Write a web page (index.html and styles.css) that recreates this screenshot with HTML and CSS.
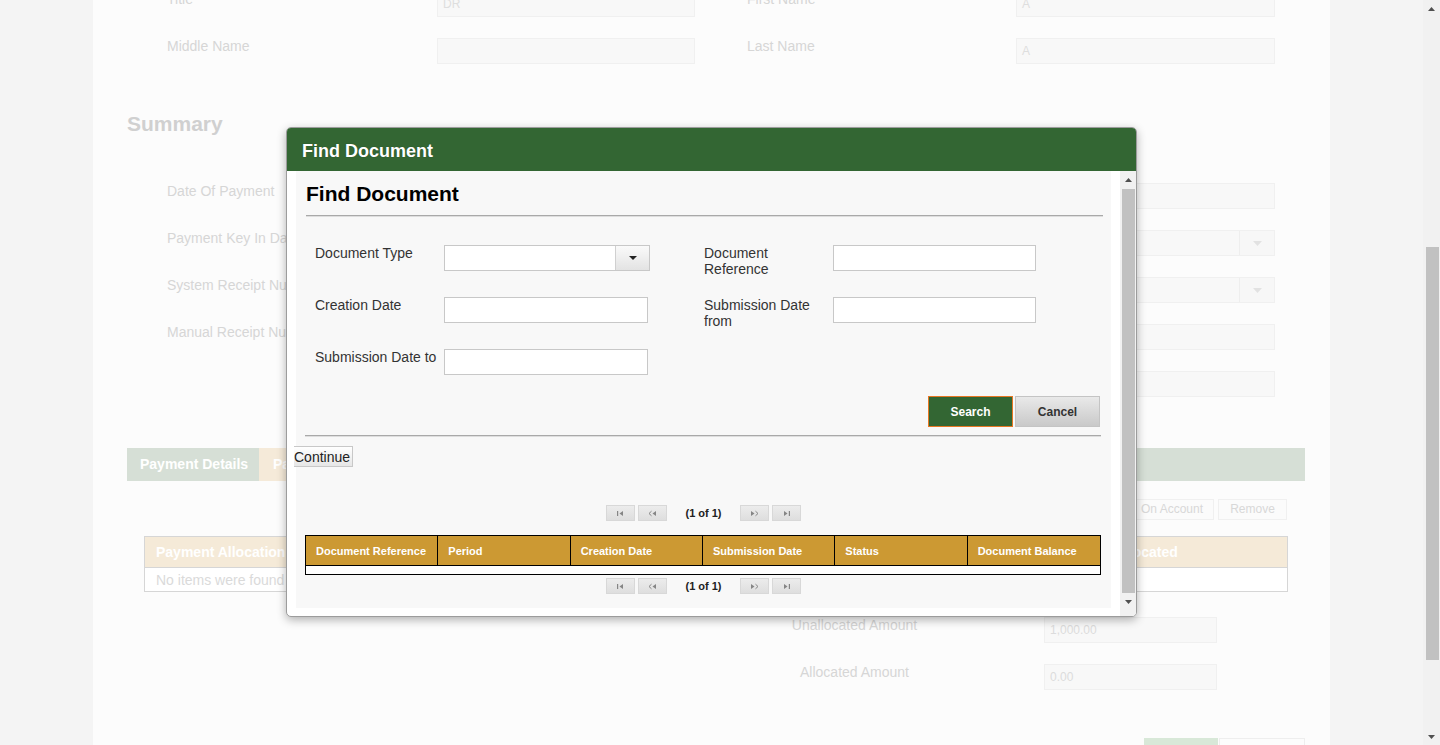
FILE: index.html
```html
<!DOCTYPE html>
<html lang="en">
<head>
<meta charset="utf-8">
<title>Find Document</title>
<link rel="stylesheet" href="styles.css">
</head>
<body>
<div class="viewport">
  <div class="page">
    <main class="panel">
      <section class="field-grid person">
        <span class="bg-label">Title</span>
        <div class="bg-input">DR</div>
        <span class="bg-label right">First Name</span>
        <div class="bg-input">A</div>
        <span class="bg-label">Middle Name</span>
        <div class="bg-input"></div>
        <span class="bg-label right">Last Name</span>
        <div class="bg-input">A</div>
      </section>

      <h2 class="section-title">Summary</h2>

      <section class="field-grid summary">
        <span class="bg-label">Date Of Payment</span>
        <div class="bg-input"></div>
        <span class="bg-label right"></span>
        <div class="bg-input"></div>

        <span class="bg-label">Payment Key In Date</span>
        <div class="bg-input"></div>
        <span class="bg-label right"></span>
        <div class="bg-input bg-select"><span class="bg-select-btn"><svg width="9" height="5" viewBox="0 0 9 5"><path d="M0 0h9L4.5 5z" fill="#e2e2e2"/></svg></span></div>

        <span class="bg-label">System Receipt Number</span>
        <div class="bg-input"></div>
        <span class="bg-label right"></span>
        <div class="bg-input bg-select"><span class="bg-select-btn"><svg width="9" height="5" viewBox="0 0 9 5"><path d="M0 0h9L4.5 5z" fill="#e2e2e2"/></svg></span></div>

        <span class="bg-label">Manual Receipt Number</span>
        <div class="bg-input"></div>
        <span class="bg-label right"></span>
        <div class="bg-input"></div>

        <span class="bg-label"></span>
        <span></span>
        <span class="bg-label right"></span>
        <div class="bg-input"></div>
      </section>

      <nav class="tabs">
        <span class="tab tab-active">Payment Details</span>
        <span class="tab tab-alt">Payment Allocation</span>
      </nav>

      <div class="alloc-actions">
        <span class="bg-btn btn-account">On Account</span>
        <span class="bg-btn btn-remove">Remove</span>
      </div>

      <table class="alloc-table">
        <thead>
          <tr>
            <th class="c-type">Payment Allocation Type</th>
            <th class="c-ref">Document Reference</th>
            <th class="c-bal">Document Balance</th>
            <th class="c-amt">Amount Allocated</th>
          </tr>
        </thead>
        <tbody>
          <tr><td colspan="4">No items were found</td></tr>
        </tbody>
      </table>

      <div class="amounts">
        <span class="amount-label">Unallocated Amount</span>
        <div class="bg-input amount-input">1,000.00</div>
        <span class="amount-label">Allocated Amount</span>
        <div class="bg-input amount-input">0.00</div>
      </div>

      <div class="footer-actions">
        <span class="foot-btn foot-primary"></span>
        <span class="foot-btn foot-secondary"></span>
      </div>
    </main>
  </div>

  <div class="page-scrollbar">
    <span class="psb-arrow"><svg width="7" height="4" viewBox="0 0 7 4"><path d="M0 4h7L3.5 0z" fill="#505050"/></svg></span>
    <span class="psb-thumb"></span>
    <span class="psb-arrow psb-down"><svg width="7" height="4" viewBox="0 0 7 4"><path d="M0 0h7L3.5 4z" fill="#505050"/></svg></span>
  </div>
</div>

<div class="dialog" role="dialog" aria-label="Find Document">
  <div class="dialog-header">Find Document</div>
  <div class="dialog-body">
    <div class="dialog-content">
      <h2 class="dlg-title">Find Document</h2>
      <div class="rule rule-top"></div>

      <div class="search-grid">
        <label class="s-label">Document Type</label>
        <div class="select">
          <span class="select-value"></span>
          <span class="select-btn"><svg width="8" height="4" viewBox="0 0 8 4"><path d="M0 0h8L4 4z" fill="#222"/></svg></span>
        </div>
        <label class="s-label s-right">Document Reference</label>
        <input class="s-input s-input-r" type="text">

        <label class="s-label">Creation Date</label>
        <input class="s-input" type="text">
        <label class="s-label s-right">Submission Date from</label>
        <input class="s-input s-input-r" type="text">

        <label class="s-label">Submission Date to</label>
        <input class="s-input" type="text">
      </div>

      <div class="action-row">
        <button class="btn btn-search" type="button">Search</button>
        <button class="btn btn-cancel" type="button">Cancel</button>
      </div>

      <div class="rule rule-mid"></div>

      <button class="btn-continue" type="button">Continue</button>

      <div class="paginator">
        <span class="pg-btn"><svg width="9" height="7" viewBox="0 0 9 7"><rect x="1" y="1" width="1.2" height="5" fill="#858585"/><path d="M7 1v5L3.5 3.5z" fill="#858585"/></svg></span>
        <span class="pg-btn"><svg width="9" height="7" viewBox="0 0 9 7"><path d="M3.5 1.2L1 3.5l2.5 2.3" fill="none" stroke="#858585"/><path d="M8 1v5L4.5 3.5z" fill="#858585"/></svg></span>
        <span class="pg-text">(1 of 1)</span>
        <span class="pg-btn"><svg width="9" height="7" viewBox="0 0 9 7"><path d="M1 1v5l3.5-2.5z" fill="#858585"/><path d="M5.5 1.2L8 3.5 5.5 5.8" fill="none" stroke="#858585"/></svg></span>
        <span class="pg-btn"><svg width="9" height="7" viewBox="0 0 9 7"><path d="M2 1v5l3.5-2.5z" fill="#858585"/><rect x="6.8" y="1" width="1.2" height="5" fill="#858585"/></svg></span>
      </div>

      <table class="results">
        <thead>
          <tr>
            <th>Document Reference</th>
            <th>Period</th>
            <th>Creation Date</th>
            <th>Submission Date</th>
            <th>Status</th>
            <th>Document Balance</th>
          </tr>
        </thead>
        <tbody>
          <tr><td colspan="6"></td></tr>
        </tbody>
      </table>

      <div class="paginator paginator-bottom">
        <span class="pg-btn"><svg width="9" height="7" viewBox="0 0 9 7"><rect x="1" y="1" width="1.2" height="5" fill="#858585"/><path d="M7 1v5L3.5 3.5z" fill="#858585"/></svg></span>
        <span class="pg-btn"><svg width="9" height="7" viewBox="0 0 9 7"><path d="M3.5 1.2L1 3.5l2.5 2.3" fill="none" stroke="#858585"/><path d="M8 1v5L4.5 3.5z" fill="#858585"/></svg></span>
        <span class="pg-text">(1 of 1)</span>
        <span class="pg-btn"><svg width="9" height="7" viewBox="0 0 9 7"><path d="M1 1v5l3.5-2.5z" fill="#858585"/><path d="M5.5 1.2L8 3.5 5.5 5.8" fill="none" stroke="#858585"/></svg></span>
        <span class="pg-btn"><svg width="9" height="7" viewBox="0 0 9 7"><path d="M2 1v5l3.5-2.5z" fill="#858585"/><rect x="6.8" y="1" width="1.2" height="5" fill="#858585"/></svg></span>
      </div>
    </div>

    <div class="dialog-scrollbar">
      <span class="dsb-arrow"><svg width="7" height="4" viewBox="0 0 7 4"><path d="M0 4h7L3.5 0z" fill="#505050"/></svg></span>
      <span class="dsb-thumb"></span>
      <span class="dsb-arrow"><svg width="7" height="4" viewBox="0 0 7 4"><path d="M0 0h7L3.5 4z" fill="#505050"/></svg></span>
    </div>
  </div>
</div>
</body>
</html>
```

FILE: styles.css
```css
* { box-sizing: border-box; }

html, body {
  margin: 0;
  height: 745px;
  overflow: hidden;
}

body {
  position: relative;
  font-family: "Liberation Sans", Arial, sans-serif;
  background: #f4f4f4;
  color: #333;
}

.viewport {
  display: flex;
  height: 745px;
}

.page {
  flex: 1;
  display: flex;
  justify-content: center;
  overflow: hidden;
  background: #f4f4f4;
}

.panel {
  flex: none;
  width: 1237px;
  height: 820px;
  margin-top: -9px;
  background: #fcfcfc;
}

/* ---------- background form (faded under the dialog) ---------- */
.field-grid {
  display: grid;
  grid-template-columns: 270px 258px 321px 259px;
  row-gap: 21px;
  align-items: start;
  padding-left: 74px;
}

.bg-label {
  font-size: 14px;
  line-height: 16px;
  color: #d6d6d6;
}

.bg-label.right { padding-left: 52px; }

.bg-input {
  position: relative;
  height: 26px;
  border: 1px solid #f0f0f0;
  background: #f8f8f8;
  padding: 0 5px;
  font-size: 12px;
  line-height: 24px;
  color: #dedede;
}

.bg-select-btn {
  position: absolute;
  top: 0;
  right: 0;
  width: 35px;
  height: 24px;
  border-left: 1px solid #eeeeee;
  background: #f7f7f7;
  display: flex;
  align-items: center;
  justify-content: center;
}

.section-title {
  margin: 48px 0 0 34px;
  font-size: 21px;
  line-height: 24px;
  font-weight: bold;
  color: #d0d0d0;
}

.summary { margin-top: 47px; }

.tabs {
  display: flex;
  width: 1178px;
  height: 33px;
  margin: 51px 0 0 34px;
  background: #d6dfd6;
}

.tab {
  font-size: 14px;
  font-weight: bold;
  line-height: 33px;
  color: #ffffff;
  white-space: nowrap;
}

.tab-active {
  width: 132px;
  padding-left: 13px;
  background: #d6dfd6;
}

.tab-alt {
  padding: 0 14px;
  background: #f5ead9;
}

.alloc-actions {
  display: flex;
  justify-content: flex-end;
  gap: 4px;
  margin: 18px 43px 0 0;
}

.bg-btn {
  height: 21px;
  border: 1px solid #f0f0f0;
  background: #fbfbfb;
  font-size: 12px;
  line-height: 19px;
  color: #d8d8d8;
  text-align: center;
}

.btn-account { width: 81px; padding-right: 3px; }
.btn-remove { width: 69px; }

.alloc-table {
  width: 1144px;
  margin: 16px 0 0 51px;
  border-collapse: collapse;
  border: 1px solid #d6d6d6;
  table-layout: fixed;
}

.alloc-table th {
  height: 31px;
  padding: 0 11px;
  background: #f5ead8;
  border-bottom: 1px solid #d6d6d6;
  font-size: 14px;
  font-weight: bold;
  color: #ffffff;
  text-align: left;
  white-space: nowrap;
  overflow: hidden;
}

.alloc-table .c-amt { width: 240px; }

.alloc-table td {
  height: 24px;
  padding: 0 11px;
  background: #ffffff;
  font-size: 14px;
  color: #dadada;
}

.amounts {
  display: grid;
  grid-template-columns: 225px 173px;
  column-gap: 77px;
  row-gap: 21px;
  margin: 25px 0 0 649px;
  align-items: start;
}

.amount-label {
  font-size: 14px;
  line-height: 16px;
  color: #d6d6d6;
  text-align: center;
}

.amount-input { color: #dcdcdc; }

.footer-actions {
  display: flex;
  justify-content: flex-end;
  gap: 1px;
  margin: 48px 25px 0 0;
}

.foot-btn { height: 26px; }
.foot-primary { width: 74px; background: #d8e8d8; }
.foot-secondary { width: 86px; border: 1px solid #eeeeee; background: #fcfcfc; }

/* ---------- page scrollbar ---------- */
.page-scrollbar {
  flex: none;
  width: 17px;
  height: 745px;
  background: #f1f1f1;
  display: flex;
  flex-direction: column;
  align-items: center;
}

.psb-arrow {
  height: 17px;
  width: 17px;
  display: flex;
  align-items: center;
  justify-content: center;
}

.psb-thumb {
  width: 13px;
  height: 413px;
  margin: 230px 0 0 1px;
  background: #c1c1c1;
}

.psb-down { margin-top: auto; }

/* ---------- dialog ---------- */
.dialog {
  position: absolute;
  left: 286px;
  top: 127px;
  width: 851px;
  height: 490px;
  display: flex;
  flex-direction: column;
  border: 1px solid #9c9c9c;
  border-radius: 5px;
  background: #ffffff;
  box-shadow: 0 3px 10px rgba(0, 0, 0, 0.3);
  overflow: hidden;
}

.dialog-header {
  flex: none;
  height: 43px;
  padding: 4px 0 0 15px;
  background: #336633;
  color: #ffffff;
  font-size: 18px;
  font-weight: bold;
  line-height: 39px;
  text-shadow: 0 0 1px rgba(0, 0, 0, 0.35);
}

.dialog-body {
  flex: 1;
  display: flex;
  align-items: flex-start;
  min-height: 0;
}

.dialog-content {
  width: 815px;
  margin: 0 9px 0 9px;
  padding: 11px 0 14px;
  background: #f8f8f8;
}

.dlg-title {
  margin: 0 0 0 10px;
  font-size: 21px;
  line-height: 24px;
  font-weight: bold;
  color: #000000;
}

.rule {
  height: 2px;
  border-top: 1px solid #a9a9a9;
  border-bottom: 1px solid #dedede;
}

.rule-top { margin: 9px 8px 0 10px; }
.rule-mid { margin: 8px 10px 0 9px; }

.search-grid {
  display: grid;
  grid-template-columns: 129px 206px 183px 203px;
  grid-template-rows: repeat(3, 26px);
  row-gap: 26px;
  align-items: start;
  margin: 28px 0 0 19px;
}

.s-label {
  font-size: 14px;
  line-height: 16px;
  color: #333333;
  padding-right: 4px;
}

.s-right { padding-left: 54px; }

.s-input {
  display: block;
  width: 204px;
  height: 26px;
  margin: 0;
  padding: 0 4px;
  border: 1px solid #c8c8c8;
  background: #ffffff;
  font: 14px "Liberation Sans", Arial, sans-serif;
}

.s-input-r { width: 203px; }

.select {
  display: flex;
  width: 206px;
  height: 26px;
  border: 1px solid #c8c8c8;
  background: #ffffff;
}

.select-value { flex: 1; }

.select-btn {
  width: 34px;
  display: flex;
  align-items: center;
  justify-content: center;
  border-left: 1px solid #d0d0d0;
  background: linear-gradient(#fafafa, #e3e3e3);
}

.action-row {
  display: flex;
  justify-content: flex-end;
  gap: 2px;
  margin: 21px 11px 0 0;
}

.btn {
  width: 85px;
  height: 31px;
  margin: 0;
  padding: 0;
  font: bold 12px "Liberation Sans", Arial, sans-serif;
  cursor: pointer;
}

.btn-search {
  background: #336633;
  border: 1px solid #e87722;
  color: #ffffff;
}

.btn-cancel {
  background: linear-gradient(#e9e9e9, #c9c9c9);
  border: 1px solid #c4c4c4;
  color: #333333;
}

.btn-continue {
  display: block;
  width: 59px;
  height: 21px;
  margin: 9px 0 0 -2px;
  padding: 0 3px 0 0;
  border: 1px solid #c8c8c8;
  border-left: none;
  background: linear-gradient(#ffffff, #e6e6e6);
  font: 14px "Liberation Sans", Arial, sans-serif;
  color: #222222;
  text-align: left;
}

.paginator {
  display: flex;
  justify-content: center;
  align-items: center;
  height: 16px;
  margin-top: 38px;
}

.paginator-bottom { margin-top: 3px; }

.pg-btn {
  width: 29px;
  height: 16px;
  margin: 0 1.5px;
  display: flex;
  align-items: center;
  justify-content: center;
  border: 1px solid #d8d8d8;
  background: linear-gradient(#ececec, #dedede);
}

.pg-text {
  margin: 0 17px;
  font-size: 11px;
  font-weight: bold;
  color: #222222;
}

.results {
  width: 796px;
  margin: 14px 0 0 9px;
  border-collapse: separate;
  border-spacing: 0;
  border: 1px solid #000000;
  table-layout: fixed;
  background: #ffffff;
}

.results th {
  height: 30px;
  padding: 0 0 0 10px;
  background: #cc9933;
  border-right: 1px solid #000000;
  border-bottom: 1px solid #000000;
  color: #ffffff;
  font-size: 11px;
  font-weight: bold;
  text-align: left;
  white-space: nowrap;
}

.results th:last-child { border-right: none; }

.results td {
  height: 8px;
  padding: 0;
  background: #ffffff;
}

.dialog-scrollbar {
  flex: none;
  align-self: stretch;
  width: 16px;
  background: #f1f1f1;
  display: flex;
  flex-direction: column;
  align-items: center;
}

.dsb-arrow {
  width: 16px;
  height: 17px;
  display: flex;
  align-items: center;
  justify-content: center;
}

.dsb-thumb {
  width: 13px;
  height: 404px;
  margin: 1px 0 0 1px;
  background: #c1c1c1;
}
```
